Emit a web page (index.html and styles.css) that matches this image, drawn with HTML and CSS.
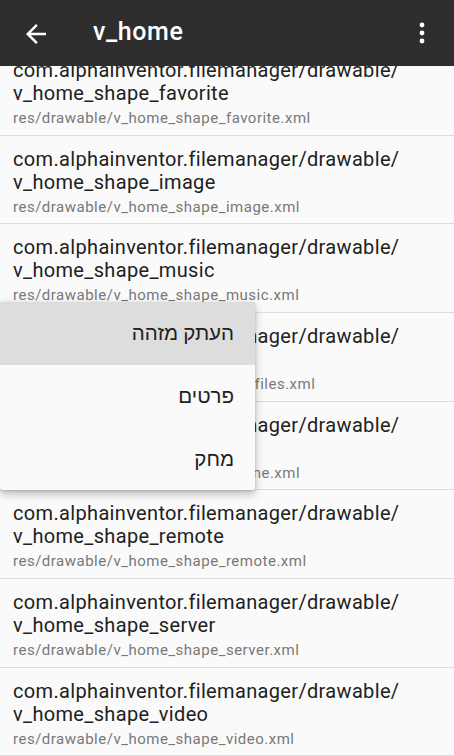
FILE: index.html
```html
<!DOCTYPE html>
<html>
    <head>
        <meta charset="utf-8">
        <title>v_home</title>
        <link rel="stylesheet" href="styles.css">
    </head>
    <body>
        <header class="appbar">
            <svg class="back" viewBox="0 0 24 24" width="30" height="30">
                <path d="M20 11H7.83l5.59-5.59L12 4l-8 8 8 8 1.41-1.41L7.83 13H20v-2z" fill="#fff"/>
            </svg>
            <h1 class="title">v_home</h1>
            <svg class="more" viewBox="0 0 8 24" width="8" height="24">
                <circle cx="4" cy="5" r="2.4" fill="#fff"/>
                <circle cx="4" cy="13" r="2.4" fill="#fff"/>
                <circle cx="4" cy="21" r="2.4" fill="#fff"/>
            </svg>
        </header>

        <ul class="list">
            <li class="item">
                <div class="name">com.alphainventor.filemanager/drawable/<br>v_home_shape_favorite</div>
                <div class="path">res/drawable/v_home_shape_favorite.xml</div>
            </li>
            <li class="item">
                <div class="name">com.alphainventor.filemanager/drawable/<br>v_home_shape_image</div>
                <div class="path">res/drawable/v_home_shape_image.xml</div>
            </li>
            <li class="item">
                <div class="name">com.alphainventor.filemanager/drawable/<br>v_home_shape_music</div>
                <div class="path">res/drawable/v_home_shape_music.xml</div>
            </li>
            <li class="item">
                <div class="name">com.alphainventor.filemanager/drawable/<br>v_home_shape_my_files</div>
                <div class="path">res/drawable/v_home_shape_my_files.xml</div>
            </li>
            <li class="item">
                <div class="name">com.alphainventor.filemanager/drawable/<br>v_home_shape_phone</div>
                <div class="path">res/drawable/v_home_shape_phone.xml</div>
            </li>
            <li class="item">
                <div class="name">com.alphainventor.filemanager/drawable/<br>v_home_shape_remote</div>
                <div class="path">res/drawable/v_home_shape_remote.xml</div>
            </li>
            <li class="item">
                <div class="name">com.alphainventor.filemanager/drawable/<br>v_home_shape_server</div>
                <div class="path">res/drawable/v_home_shape_server.xml</div>
            </li>
            <li class="item">
                <div class="name">com.alphainventor.filemanager/drawable/<br>v_home_shape_video</div>
                <div class="path">res/drawable/v_home_shape_video.xml</div>
            </li>
        </ul>

        <div class="popup" dir="rtl">
            <div class="popup-item active">העתק מזהה</div>
            <div class="popup-item">פרטים</div>
            <div class="popup-item">מחק</div>
        </div>
    </body>
</html>
```

FILE: styles.css
```css
html, body {
    height: 100%;
}

body {
    margin: 0;
    font-family: Roboto, "Liberation Sans", sans-serif;
    background-color: #fafafa;
    color: #212121;
    overflow: hidden;
    position: relative;
}

.appbar {
    position: relative;
    z-index: 1;
    height: 66px;
    background-color: #2e2e2e;
    display: flex;
    align-items: center;
    padding: 0 0 0 21px;
    box-sizing: border-box;
}

.back {
    display: block;
    margin-top: 1px;
}

.title {
    margin: 0 0 0 42px;
    flex: 1;
    color: #fff;
    font-size: 25px;
    font-weight: 500;
    letter-spacing: 0.6px;
    line-height: 1;
    padding-bottom: 3px;
}

.more {
    display: block;
    margin-right: 28px;
    margin-top: -3px;
}

.list {
    list-style: none;
    margin: -19px 0 0 0;
    padding: 0;
}

.item {
    padding: 12px 13px 7px;
    border-bottom: 1px solid #dcdcdc;
    height: 88.67px;
    box-sizing: border-box;
}

.name {
    font-size: 20px;
    line-height: 23px;
    letter-spacing: 0.34px;
    color: #212121;
    white-space: nowrap;
}

.path {
    margin-top: 3px;
    font-size: 15px;
    line-height: 20px;
    letter-spacing: 0.5px;
    color: #787878;
    white-space: nowrap;
}

/* context menu */
.popup {
    position: absolute;
    top: 302px;
    left: 0;
    width: 255px;
    background-color: #fafafa;
    box-shadow: 0 4px 10px rgba(0,0,0,0.25), 0 1px 3px rgba(0,0,0,0.15);
    border-radius: 2px;
    font-family: Roboto, "Liberation Sans", "DejaVu Sans", sans-serif;
}

.popup-item {
    height: 62.67px;
    display: flex;
    align-items: center;
    padding-right: 21px;
    font-size: 20.5px;
    color: #212121;
}

.popup-item.active {
    background-color: #dddddd;
}
```
